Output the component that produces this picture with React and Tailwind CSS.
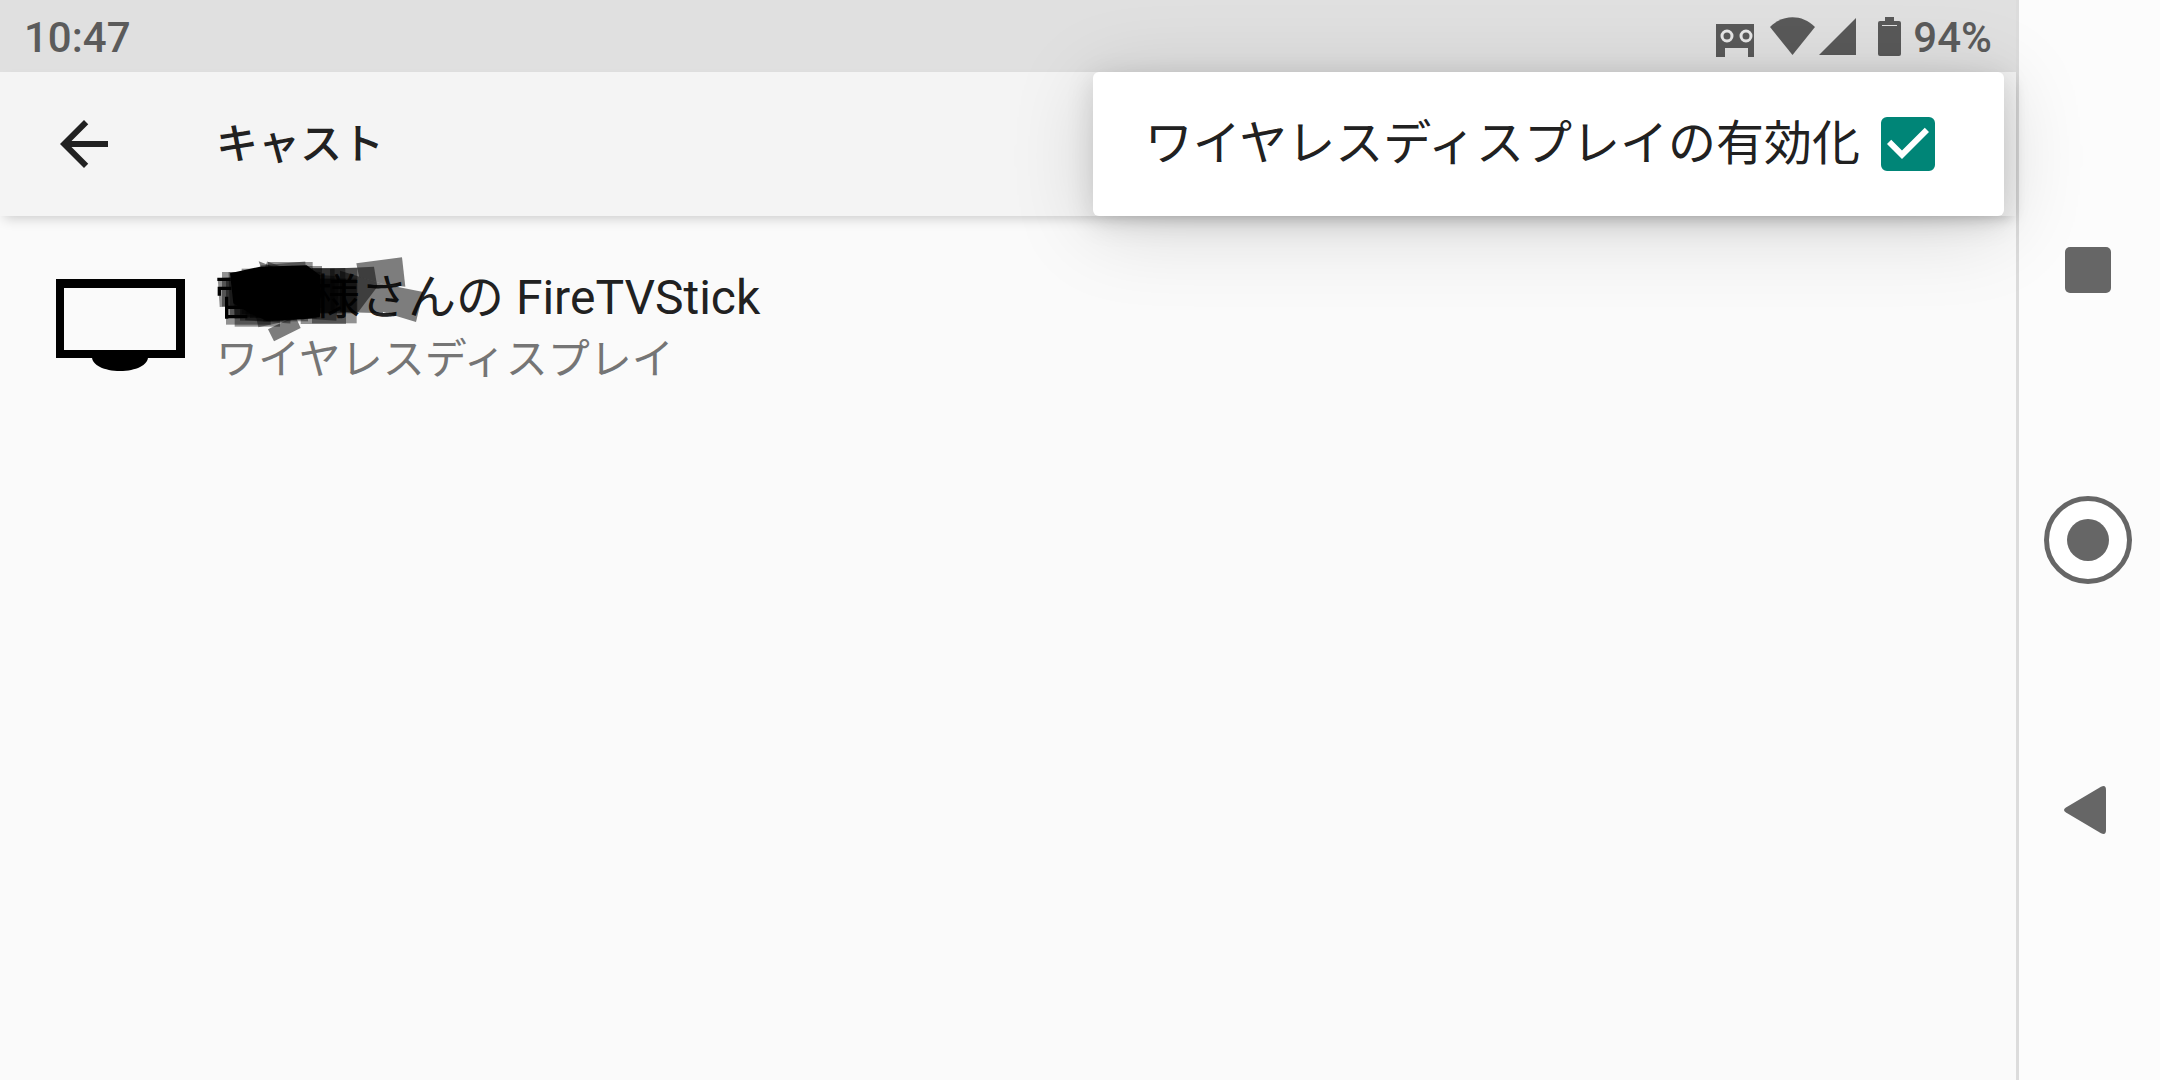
import { useState } from 'react';

// x, y, size and tilt of each translucent marker square
const marks = [
  [56, 112, 86, -4], [66, 96, 104, 0], [78, 120, 134, 0], [88, 94, 136, -2],
  [104, 124, 136, 0], [100, 98, 134, -3], [125, 86, 136, 0], [140, 110, 136, 4],
  [154, 88, 136, -10], [174, 84, 136, 20], [192, 138, 90, -26], [160, 120, 130, -12],
  [186, 70, 136, -5], [190, 110, 134, 0], [204, 66, 134, 0], [216, 90, 140, 5],
  [226, 108, 130, -3], [240, 78, 126, 0], [120, 112, 130, 0], [176, 100, 130, 3],
  [270, 86, 134, 0], [280, 104, 134, 4], [150, 96, 138, 0],
  [302, 84, 134, 0], [302, 116, 136, 0], [336, 84, 136, 0], [336, 116, 134, 0],
];

const StatusBar = () => (
  <div className="flex h-18 items-center justify-between bg-[#e0e0e0] px-6 text-[42px] font-medium leading-[48px] text-[#5b5b5b]">
    <time className="pt-[3px]">10:47</time>
    <div className="flex items-center">
      <svg viewBox="0 0 38 33" className="mr-4 mt-2 h-[33px] w-[38px]" aria-hidden="true">
        <path d="M0 0h38v33h-6v-9H9v9H0z" fill="#595959" />
        <circle cx="11" cy="12" r="5" fill="#595959" stroke="#e6e6e6" strokeWidth="3" />
        <circle cx="30" cy="12" r="5" fill="#595959" stroke="#e6e6e6" strokeWidth="3" />
      </svg>
      <svg viewBox="0 0 45 38" className="mr-1 h-[38px] w-[45px]" fill="#595959" aria-hidden="true">
        <path d="M0 10C13-3 32-3 45 10L22.500 38z" />
      </svg>
      <svg viewBox="0 0 37 37" className="mr-[22px] h-[37px] w-[37px]" fill="#595959" aria-hidden="true">
        <path d="M37 0v37H0z" />
      </svg>
      <svg viewBox="0 0 23 39" className="mr-3 h-[39px] w-[23px]" aria-hidden="true">
        <path d="M7 0h9v4h5a2 2 0 0 1 2 2v31a2 2 0 0 1-2 2H2a2 2 0 0 1-2-2V6a2 2 0 0 1 2-2h5z" fill="#595959" />
        <path d="M4 8.500h15" stroke="#e0e0e0" />
      </svg>
      <span className="pt-[3px]">94%</span>
    </div>
  </div>
);

const OptionsMenu = () => {
  const [enabled, setEnabled] = useState(true);

  return (
    <label className="absolute right-3 top-18 z-10 flex h-36 items-center rounded-md bg-white pl-13 pr-[69px] text-5xl text-[#212121] shadow-[0_12px_84px_rgba(0,0,0,0.15),0_6px_28px_rgba(0,0,0,0.13)]">
      <span className="whitespace-nowrap">ワイヤレスディスプレイの有効化</span>
      <span className="ml-[21px] grid">
        <input
          type="checkbox"
          checked={enabled}
          onChange={(e) => setEnabled(e.target.checked)}
          className="peer col-start-1 row-start-1 size-[54px] appearance-none rounded-md border-6 border-[#757575] checked:border-[#008577] checked:bg-[#008577]"
        />
        <svg viewBox="3 3 18 18" className="pointer-events-none invisible col-start-1 row-start-1 size-[54px] peer-checked:visible" fill="white" aria-hidden="true">
          <path d="M10 17l-5-5 1.410-1.410L10 14.170l7.590-7.590L19 8z" />
        </svg>
      </span>
    </label>
  );
};

const DeviceRow = () => (
  <li>
    <button type="button" className="flex w-full items-center gap-6 px-12 pb-12 pt-13 text-left">
      <svg viewBox="0 0 144 110" className="h-[110px] w-36 shrink-0" aria-hidden="true">
        <path fillRule="evenodd" d="M8 4h129v79H8zM16 13v62h112V13z" />
        <path d="M44 82h56c0 8-12 14-28 14s-28-6-28-14z" />
      </svg>
      <span>
        <span className="relative block whitespace-nowrap pl-24 text-5xl leading-[60px] text-[#212121]">
          様さんの FireTVStick
          <svg viewBox="0 0 900 330" className="absolute -left-4 -top-7 h-[110px] w-[300px]" aria-hidden="true">
            <path d="M52 118h40M58 167v-22h36M80 236v-66M80 202h50M82 230h60" fill="none" stroke="black" strokeWidth="10" />
            {marks.map(([x, y, size, tilt], i) => (
              <rect
                key={i}
                x={x}
                y={y}
                width={size}
                height={size}
                transform={`rotate(${tilt} ${x + size / 2} ${y + size / 2})`}
                fillOpacity="0.42"
              />
            ))}
            <path d="M90 100l90-20 140-4 40 30 0 124-50 8-110 4-50-22-50-30z" />
            <path d="M176 64l90 34-40 100z" fillOpacity="0.5" />
            <path d="M204 268l82-40 16 36-80 40z" fillOpacity="0.5" />
            <path d="M390 86l132-6 10 60-60 80-80-10z" fillOpacity="0.5" />
            <path d="M420 92l129 40v88l-129-4z" fillOpacity="0.5" />
            <path d="M469 70l137-18 10 88-67-8-72-22z" fillOpacity="0.5" />
            <path d="M549 132l121 24-22 90-99-30z" fillOpacity="0.5" />
          </svg>
        </span>
        <span className="block text-[42px] leading-[64px] text-[#757575]">ワイヤレスディスプレイ</span>
      </span>
    </button>
  </li>
);

const NavigationBar = () => (
  <nav className="flex w-36 shrink-0 flex-col border-l-3 border-[#dcdcdc] bg-[#fcfcfc] py-[135px] pr-[3px]">
    <button type="button" aria-label="最近" className="flex flex-1 items-center justify-center">
      <svg viewBox="0 0 88 88" className="size-[88px]" fill="#666">
        <rect x="21" y="21" width="46" height="46" rx="5" />
      </svg>
    </button>
    <button type="button" aria-label="ホーム" className="flex flex-1 items-center justify-center">
      <svg viewBox="0 0 88 88" className="size-[88px]" fill="#666">
        <circle cx="44" cy="44" r="41.500" fill="white" stroke="#666" strokeWidth="5" />
        <circle cx="44" cy="44" r="21" />
      </svg>
    </button>
    <button type="button" aria-label="戻る" className="flex flex-1 items-center justify-center">
      <svg viewBox="0 0 88 88" className="size-[88px]" fill="#666">
        <path d="M22 41.500L57 20.800Q62 18.500 62 24v40q0 5.500-5 3.200L22 46.500q-4-2.500 0-5z" />
      </svg>
    </button>
  </nav>
);

const App = () => {
  return (
    <div className="flex min-h-screen bg-[#fafafa] font-['Roboto','Noto_Sans_CJK_JP',sans-serif]">
      <div className="relative flex-1">
        <StatusBar />
        <header className="flex h-36 items-center gap-24 bg-[#f4f4f4] px-12 shadow-[0_6px_12px_-4px_rgba(0,0,0,0.2)]">
          <button type="button" aria-label="戻る">
            <svg viewBox="0 0 24 24" className="size-18" fill="#212121">
              <path d="M20 11H7.830l5.590-5.590L12 4l-8 8 8 8 1.410-1.410L7.830 13H20z" />
            </svg>
          </button>
          <h1 className="text-[42px] font-medium text-[#212121]">キャスト</h1>
        </header>
        <OptionsMenu />
        <ul>
          <DeviceRow />
        </ul>
      </div>
      <NavigationBar />
    </div>
  );
};

export default App;
